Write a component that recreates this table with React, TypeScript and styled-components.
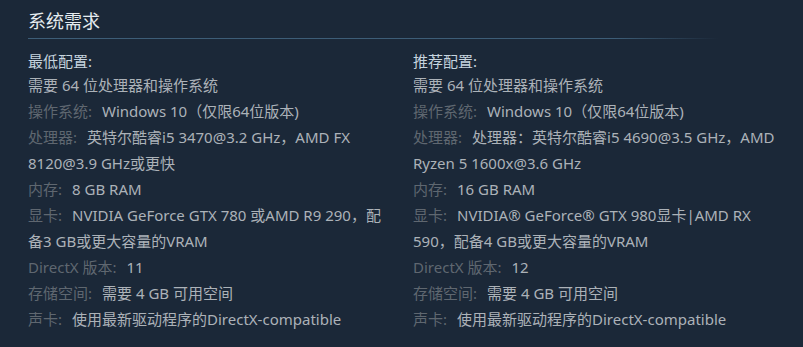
import React from 'react'
import styled, { createGlobalStyle } from 'styled-components'

const GlobalStyle = createGlobalStyle`
  html, body {
    margin: 0;
    padding: 0;
    background: #1b2838;
  }
  body {
    font-family: "Noto Sans", "Noto Sans CJK SC", sans-serif;
  }
`

// 页面容器
const Page = styled.div`
  width: 803px;
  height: 347px;
  box-sizing: border-box;
  padding: 0 0 0 28px;
  background: #1b2838;
  overflow: hidden;
`

// 标题
const Title = styled.h2`
  margin: 0;
  width: 690px;
  height: 39px;
  box-sizing: border-box;
  padding-top: 8px;
  font-size: 18px;
  line-height: 26px;
  font-weight: normal;
  color: #e6ecf0;
  border-bottom: 1px solid transparent;
  border-image: linear-gradient(to right, #3d5d77 0%, #3d5d77 85%, rgba(61, 93, 119, 0) 100%) 1;
`

// 两列布局
const Columns = styled.div`
  display: grid;
  grid-template-columns: 362px 373px;
  column-gap: 23px;
  margin-top: 9px;
`

const Column = styled.div`
  font-size: 15px;
  line-height: 26px;
  color: #acb2b8;
`

const Heading = styled.div`
  color: #c6d4df;
  line-height: 26px;
  margin-bottom: -2px;
`

const List = styled.ul`
  list-style: none;
  margin: 0;
  padding: 0;
`

const Item = styled.li`
  margin: 0;
`

const Label = styled.span`
  color: #5f6770;
  margin-right: 10px;
`

interface Req {
  label?: string
  value: string
}

const minimum: Req[] = [
  { value: '需要 64 位处理器和操作系统' },
  { label: '操作系统:', value: 'Windows 10（仅限64位版本)' },
  { label: '处理器:', value: '英特尔酷睿i5 3470@3.2 GHz，AMD FX 8120@3.9 GHz或更快' },
  { label: '内存:', value: '8 GB RAM' },
  { label: '显卡:', value: 'NVIDIA GeForce GTX 780 或AMD R9 290，配备3 GB或更大容量的VRAM' },
  { label: 'DirectX 版本:', value: '11' },
  { label: '存储空间:', value: '需要 4 GB 可用空间' },
  { label: '声卡:', value: '使用最新驱动程序的DirectX-compatible' },
]

const recommended: Req[] = [
  { value: '需要 64 位处理器和操作系统' },
  { label: '操作系统:', value: 'Windows 10（仅限64位版本)' },
  { label: '处理器:', value: '处理器：英特尔酷睿i5 4690@3.5 GHz，AMD Ryzen 5 1600x@3.6 GHz' },
  { label: '内存:', value: '16 GB RAM' },
  { label: '显卡:', value: 'NVIDIA® GeForce® GTX 980显卡|AMD RX 590，配备4 GB或更大容量的VRAM' },
  { label: 'DirectX 版本:', value: '12' },
  { label: '存储空间:', value: '需要 4 GB 可用空间' },
  { label: '声卡:', value: '使用最新驱动程序的DirectX-compatible' },
]

const ReqColumn: React.FC<{ heading: string; items: Req[] }> = ({ heading, items }) => (
  <Column>
    <Heading>{heading}</Heading>
    <List>
      {items.map((it, i) => (
        <Item key={i}>
          {it.label && <Label>{it.label}</Label>}
          {it.value}
        </Item>
      ))}
    </List>
  </Column>
)

export default function App() {
  return (
    <>
      <GlobalStyle />
      <Page>
        <Title>系统需求</Title>
        <Columns>
          <ReqColumn heading="最低配置:" items={minimum} />
          <ReqColumn heading="推荐配置:" items={recommended} />
        </Columns>
      </Page>
    </>
  )
}
